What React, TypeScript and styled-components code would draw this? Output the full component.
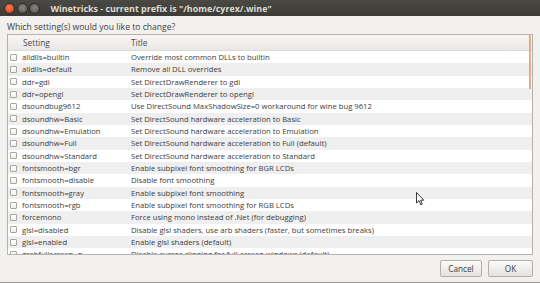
import React from "react";
import styled, { createGlobalStyle } from "styled-components";

const Global = createGlobalStyle`
  html, body { margin: 0; padding: 0; background: #f2f1f0; }
  body { font-family: "Open Sans", "Noto Sans", sans-serif; }
`;

const rows: [string, string][] = [
  ["alldlls=builtin", "Override most common DLLs to builtin"],
  ["alldlls=default", "Remove all DLL overrides"],
  ["ddr=gdi", "Set DirectDrawRenderer to gdi"],
  ["ddr=opengl", "Set DirectDrawRenderer to opengl"],
  ["dsoundbug9612", "Use DirectSound MaxShadowSize=0 workaround for wine bug 9612"],
  ["dsoundhw=Basic", "Set DirectSound hardware acceleration to Basic"],
  ["dsoundhw=Emulation", "Set DirectSound hardware acceleration to Emulation"],
  ["dsoundhw=Full", "Set DirectSound hardware acceleration to Full (default)"],
  ["dsoundhw=Standard", "Set DirectSound hardware acceleration to Standard"],
  ["fontsmooth=bgr", "Enable subpixel font smoothing for BGR LCDs"],
  ["fontsmooth=disable", "Disable font smoothing"],
  ["fontsmooth=gray", "Enable subpixel font smoothing"],
  ["fontsmooth=rgb", "Enable subpixel font smoothing for RGB LCDs"],
  ["forcemono", "Force using mono instead of .Net (for debugging)"],
  ["glsl=disabled", "Disable glsl shaders, use arb shaders (faster, but sometimes breaks)"],
  ["glsl=enabled", "Enable glsl shaders (default)"],
  ["grabfullscreen=n", "Disable cursor clipping for full-screen windows (default)"],
];

const Window = styled.div`
  position: relative;
  width: 540px;
  height: 283px;
  display: flex;
  flex-direction: column;
  background: #f2f1f0;
  overflow: hidden;
  box-sizing: border-box;
  border-bottom: 1px solid #9a9894;
`;

const TitleBar = styled.div`
  height: 16px;
  flex: none;
  display: flex;
  align-items: center;
  background: linear-gradient(#4a4944, #3c3b37);
  padding-left: 4px;
`;

const WinButton = styled.span<{ $close?: boolean }>`
  width: 9px;
  height: 9px;
  border-radius: 50%;
  margin-right: 1.5px;
  background: ${(p) =>
    p.$close
      ? "radial-gradient(circle at 50% 40%, #f5805c, #df4a1d 70%)"
      : "radial-gradient(circle at 50% 40%, #8a8985, #5f5e5a 70%)"};
  border: 0.5px solid #2b2a27;
`;

const TitleText = styled.span`
  margin-left: 9px;
  color: #dfdbd2;
  font-weight: 700;
  font-size: 8.9px;
  white-space: nowrap;
`;

const Body = styled.div`
  flex: 1;
  display: flex;
  flex-direction: column;
  padding: 4px 7px 5px 7px;
  min-height: 0;
`;

const Prompt = styled.div`
  color: #3c3c3c;
  font-size: 8.6px;
  height: 14px;
  line-height: 14px;
`;

const ListBox = styled.div`
  position: relative;
  height: 221px;
  flex: none;
  box-sizing: border-box;
  border: 1px solid #b6b3ae;
  background: #ffffff;
  overflow: hidden;
`;

const Header = styled.div`
  display: grid;
  grid-template-columns: 108px 1fr;
  height: 15px;
  align-items: center;
  background: linear-gradient(#f7f6f5, #e9e8e6);
  border-bottom: 1px solid #dcdad5;
  color: #4a4a4a;
  font-size: 8.3px;
  padding-left: 15px;
`;

const Row = styled.div<{ $alt: boolean }>`
  display: grid;
  grid-template-columns: 7px 104px 1fr;
  column-gap: 5px;
  align-items: center;
  height: 12.33px;
  padding-left: 2px;
  background: ${(p) => (p.$alt ? "#efefef" : "#ffffff")};
  color: #3c3c3c;
  font-size: 7.7px;
  white-space: nowrap;
`;

const Check = styled.span`
  width: 5px;
  height: 5px;
  border: 1px solid #a8a6a1;
  border-radius: 1px;
  background: linear-gradient(#ffffff, #f0efee);
`;

const Cell = styled.span`
  overflow: hidden;
  line-height: 12px;
`;

const ScrollHint = styled.div`
  position: absolute;
  right: 1px;
  top: 0;
  width: 2px;
  height: 54px;
  background: linear-gradient(90deg, #e89a76, #f0b79b);
`;

const Buttons = styled.div`
  display: flex;
  justify-content: flex-end;
  gap: 6px;
  margin-top: 5px;
`;

const Button = styled.button<{ $w: number }>`
  width: ${(p) => p.$w}px;
  height: 17px;
  padding: 0;
  box-sizing: border-box;
  border: 1px solid #b3b0aa;
  border-radius: 2px;
  background: linear-gradient(#fbfbfa, #e3e2e0);
  color: #3c3c3c;
  font-family: "Open Sans", "Noto Sans", sans-serif;
  font-size: 8.2px;
`;

const Cursor = styled.svg`
  position: absolute;
  left: 416px;
  top: 192px;
`;

export default function App() {
  return (
    <>
      <Global />
      <Window>
        <TitleBar>
          <WinButton $close />
          <WinButton />
          <WinButton />
          <TitleText>Winetricks - current prefix is "/home/cyrex/.wine"</TitleText>
        </TitleBar>
        <Body>
          <Prompt>Which setting(s) would you like to change?</Prompt>
          <ListBox>
            <Header>
              <span>Setting</span>
              <span>Title</span>
            </Header>
            {rows.map(([k, t], i) => (
              <Row key={k} $alt={i % 2 === 1}>
                <Check />
                <Cell>{k}</Cell>
                <Cell>{t}</Cell>
              </Row>
            ))}
            <ScrollHint />
          </ListBox>
          <Buttons>
            <Button $w={42}>Cancel</Button>
            <Button $w={45}>OK</Button>
          </Buttons>
        </Body>
        <Cursor width="9" height="14" viewBox="0 0 9 14">
          <path d="M0.5 0.5 L0.5 11 L3 8.7 L4.8 12.8 L6.3 12.1 L4.6 8.2 L7.8 8.2 Z" fill="#ffffff" stroke="#222" strokeWidth="0.9" strokeLinejoin="round" />
        </Cursor>
      </Window>
    </>
  );
}
